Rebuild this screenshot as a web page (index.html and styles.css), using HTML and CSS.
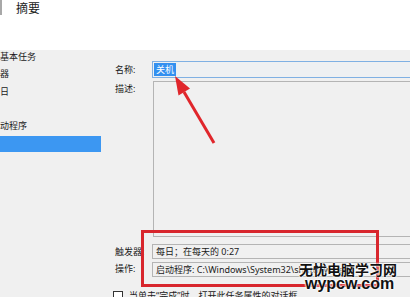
FILE: index.html
```html
<!DOCTYPE html>
<html lang="zh-CN">
  <head>
    <meta charset="UTF-8" />
    <meta name="viewport" content="width=device-width, initial-scale=1.0" />
    <title>创建基本任务向导 - 摘要</title>
    <link rel="stylesheet" href="styles.css">
  </head>
  <body>
    <div class="header">
      <div class="header-bar"></div>
      <div class="header-title">摘要</div>
    </div>
    <div class="main">
      <ul class="steps">
        <li class="step">基本任务</li>
        <li class="step">器</li>
        <li class="step">日</li>
        <li class="step"></li>
        <li class="step">动程序</li>
        <li class="step selected"></li>
      </ul>
      <div class="form">
        <label class="label">名称:</label>
        <div class="field name-field"><span class="selection">关机</span></div>
        <label class="label label-top">描述:</label>
        <div class="field desc-field"></div>
        <label class="label trigger-label">触发器:</label>
        <div class="field info-field trigger-field">每日；在每天的 0:27</div>
        <label class="label">操作:</label>
        <div class="field info-field">启动程序: C:\Windows\System32\shutdown.exe</div>
        <div class="check-row">
          <span class="checkbox"></span>
          <span>当单击“完成”时，打开此任务属性的对话框</span>
        </div>
      </div>
    </div>

    <svg class="marks" width="410" height="297" viewBox="0 0 410 297">
      <rect x="142.5" y="231.5" width="235" height="54" fill="none" stroke="#d8262d" stroke-width="3" />
      <line x1="214" y1="143" x2="184" y2="92" stroke="#e0262b" stroke-width="3" />
      <polygon points="175,76 178.5,95.5 190,88.5" fill="#e0262b" />
    </svg>

    <div class="watermark">
      <div class="wm-name">无忧电脑学习网</div>
      <div class="wm-url">wypcw.com</div>
    </div>
  </body>
</html>
```

FILE: styles.css
```css
body {
  font-family: "Noto Sans", "Noto Sans CJK SC", sans-serif;
  font-size: 9px;
  color: #1a1a1a;
  margin: 0;
  width: 410px;
  height: 297px;
  overflow: hidden;
  position: relative;
  background-color: #f0f0f0;
}
.header {
  height: 50px;
  background: white;
  display: flex;
  align-items: flex-start;
}
.header-bar {
  width: 2px;
  height: 15px;
  background: #a8a8a8;
}
.header-title {
  margin-left: 14px;
  margin-top: 1px;
  font-size: 12px;
  line-height: 16px;
  color: #222;
}
.main {
  display: flex;
  height: 247px;
}
.steps {
  list-style: none;
  margin: -2px 0 0;
  padding: 0;
  width: 101px;
}
.step {
  height: 17.3px;
  line-height: 17.3px;
  white-space: nowrap;
}
.step.selected {
  height: 16px;
  margin-top: 1.5px;
  background: #3c97f2;
}
.form {
  flex: 1;
  display: grid;
  grid-template-columns: 37px 1fr;
  align-content: start;
  padding: 11px 0 0 14px;
  margin-right: -6px;
}
.label {
  align-self: center;
  white-space: nowrap;
}
.label-top {
  align-self: start;
  margin-top: 4px;
}
.trigger-label {
  margin-top: 7px;
}
.field {
  box-sizing: border-box;
  border: 1px solid #b4b4b4;
  background: #f0f0f0;
  white-space: nowrap;
  overflow: hidden;
}
.name-field {
  height: 17px;
  border-color: #7fb0e3;
  background: #eef0f2;
  padding: 1px 0 0 1px;
  line-height: 13px;
}
.selection {
  display: inline-block;
  background: #3390f0;
  color: white;
  padding: 0 2px;
}
.desc-field {
  height: 156px;
  margin-top: 3px;
  margin-left: 1px;
}
.info-field {
  height: 15px;
  line-height: 13px;
  padding-left: 3px;
  margin-top: 3px;
}
.trigger-field {
  margin-top: 7px;
}
.check-row {
  grid-column: 1 / 3;
  display: flex;
  align-items: center;
  gap: 6px;
  margin: 12px 0 0 -2px;
  white-space: nowrap;
}
.checkbox {
  width: 8px;
  height: 8px;
  border: 1px solid #333;
  background: white;
}
.marks {
  position: absolute;
  top: 0;
  left: 0;
}
.watermark {
  position: absolute;
  left: 299px;
  top: 260px;
  font-weight: bold;
  color: #111;
  text-shadow: 0 0 2px white, 0 0 2px white, 0 0 2px white;
}
.wm-name {
  font-family: "Noto Sans CJK SC", sans-serif;
  font-size: 14px;
  line-height: 18px;
}
.wm-url {
  font-family: "Liberation Sans", Arial, sans-serif;
  font-size: 16px;
  line-height: 12px;
  margin-left: 6px;
}
```
